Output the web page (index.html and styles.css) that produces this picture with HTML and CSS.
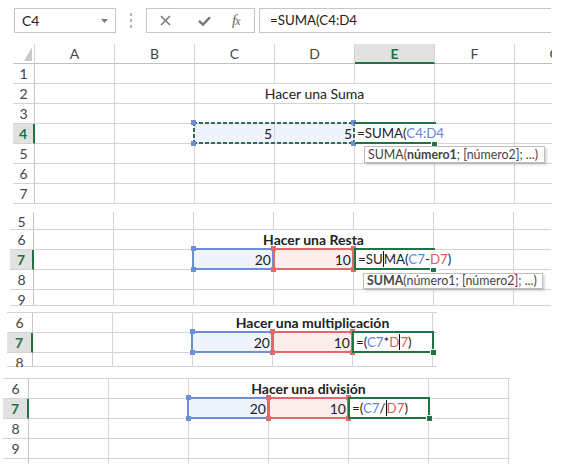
FILE: index.html
```html
<!DOCTYPE html>
<html lang="es">
<head>
<meta charset="utf-8">
<title>Excel SUMA</title>
<link rel="stylesheet" href="styles.css">
</head>
<body>
<div class="page">
  <div class="toolbar">
    <div class="namebox"><span>C4</span><svg class="dd" width="7" height="4" viewBox="0 0 7 4"><path d="M0 0H7L3.5 4Z" fill="#7a7a7a"/></svg></div>
    <div class="grip"><i></i><i></i><i></i></div>
    <div class="btns">
      <svg class="ico" width="11" height="11" viewBox="0 0 11 11"><path d="M1 1L10 10M10 1L1 10" stroke="#777" stroke-width="1.5" fill="none"/></svg>
      <svg class="ico" width="13" height="10" viewBox="0 0 13 10"><path d="M1 5L5 8.6L12 1.2" stroke="#777" stroke-width="2.4" fill="none"/></svg>
      <span class="fx">f<span>x</span></span>
    </div>
    <div class="fbar">=SUMA(C4:D4</div>
  </div>

  <div class="sheet s1">
    <div class="c corner"><svg width="22" height="19" viewBox="0 0 22 19"><path d="M19 3V17H11Z" fill="#c9c9c9"/></svg></div>
    <div class="c ch">A</div><div class="c ch">B</div><div class="c ch">C</div><div class="c ch">D</div><div class="c ch csel">E</div><div class="c ch">F</div><div class="c ch">G</div>

    <div class="c rn">1</div><div class="c"></div><div class="c"></div><div class="c"></div><div class="c"></div><div class="c"></div><div class="c"></div><div class="c"></div>
    <div class="c rn">2</div><div class="c"></div><div class="c"></div><div class="c title">Hacer una Suma</div><div class="c"></div><div class="c"></div>
    <div class="c rn">3</div><div class="c"></div><div class="c"></div><div class="c"></div><div class="c"></div><div class="c"></div><div class="c"></div><div class="c"></div>
    <div class="c rn rsel">4</div><div class="c"></div><div class="c"></div><div class="c num fb">5</div><div class="c num fb">5</div><div class="c"></div><div class="c"></div><div class="c"></div>
    <div class="c rn">5</div><div class="c"></div><div class="c"></div><div class="c"></div><div class="c"></div><div class="c"></div><div class="c"></div><div class="c"></div>
    <div class="c rn">6</div><div class="c"></div><div class="c"></div><div class="c"></div><div class="c"></div><div class="c"></div><div class="c"></div><div class="c"></div>
    <div class="c rn">7</div><div class="c"></div><div class="c"></div><div class="c"></div><div class="c"></div><div class="c"></div><div class="c"></div><div class="c"></div>

    <div class="ants"></div>
    <div class="h hb" style="left:178px;top:76px"></div>
    <div class="h hb" style="left:338px;top:76px"></div>
    <div class="h hb" style="left:178px;top:97px"></div>
    <div class="h hb" style="left:338px;top:97px"></div>
    <div class="gl" style="left:341px;top:78px;width:82px"></div>
    <div class="gl" style="left:342px;top:98px;width:77px"></div>
    <div class="h hg" style="left:419px;top:97px"></div>
    <div class="editor e1">=SUMA(<span class="rb">C4:D4</span></div>
    <div class="tip t1">SUMA(<b>número1</b>; [número2]; ...)</div>
  </div>

  <div class="sheet s2">
    <div class="c rn">5</div><div class="c"></div><div class="c"></div><div class="c"></div><div class="c"></div><div class="c"></div><div class="c"></div><div class="c"></div>
    <div class="c rn">6</div><div class="c"></div><div class="c"></div><div class="c title bold">Hacer una Resta</div><div class="c"></div><div class="c"></div>
    <div class="c rn rsel">7</div><div class="c"></div><div class="c"></div><div class="c num fb">20</div><div class="c num fr">10</div><div class="c"></div><div class="c"></div><div class="c"></div>
    <div class="c rn">8</div><div class="c"></div><div class="c"></div><div class="c"></div><div class="c"></div><div class="c"></div><div class="c"></div><div class="c"></div>
    <div class="c rn">9</div><div class="c"></div><div class="c"></div><div class="c"></div><div class="c"></div><div class="c"></div><div class="c"></div><div class="c"></div>

    <div class="rbox blue" style="left:182px;top:36px"></div>
    <div class="rbox red" style="left:263px;top:36px"></div>
    <div class="h hb" style="left:181px;top:34px"></div>
    <div class="h hb" style="left:181px;top:55px"></div>
    <div class="h hr" style="left:261px;top:34px"></div>
    <div class="h hr" style="left:341px;top:34px"></div>
    <div class="h hr" style="left:261px;top:55px"></div>
    <div class="h hr" style="left:341px;top:55px"></div>
    <div class="gl" style="left:344px;top:36px;width:2px;height:22px"></div>
    <div class="gl" style="left:345px;top:36px;width:80px"></div>
    <div class="gl" style="left:345px;top:56px;width:76px"></div>
    <div class="h hg" style="left:421px;top:55px"></div>
    <div class="editor e2">=SU<i class="caret"></i>MA(<span class="rb">C7</span>-<span class="rr">D7</span>)</div>
    <div class="tip t2"><b>SUMA</b>(número1; [número2]; ...)</div>
  </div>

  <div class="sheet s3">
    <div class="c rn">6</div><div class="c"></div><div class="c"></div><div class="c title bold">Hacer una multiplicación</div><div class="c"></div>
    <div class="c rn rsel">7</div><div class="c"></div><div class="c"></div><div class="c num fb">20</div><div class="c num fr">10</div><div class="c"></div><div class="c"></div>
    <div class="c rn">8</div><div class="c"></div><div class="c"></div><div class="c"></div><div class="c"></div><div class="c"></div><div class="c"></div>

    <div class="rbox blue" style="left:184px;top:18px"></div>
    <div class="rbox red" style="left:265px;top:18px"></div>
    <div class="h hb" style="left:183px;top:16px"></div>
    <div class="h hb" style="left:183px;top:37px"></div>
    <div class="h hr" style="left:263px;top:16px"></div>
    <div class="h hr" style="left:343px;top:16px"></div>
    <div class="h hr" style="left:263px;top:37px"></div>
    <div class="h hr" style="left:343px;top:37px"></div>
    <div class="gbox" style="left:345px;top:18px">=(<span class="rb">C7</span>*<span class="rr">D<i class="caret"></i>7</span>)</div>
    <div class="h hg" style="left:424px;top:37px"></div>
  </div>

  <div class="sheet s4">
    <div class="c rn">6</div><div class="c"></div><div class="c"></div><div class="c title bold">Hacer una división</div><div class="c"></div><div class="c"></div>
    <div class="c rn rsel">7</div><div class="c"></div><div class="c"></div><div class="c num fb">20</div><div class="c num fr">10</div><div class="c"></div><div class="c"></div><div class="c"></div>
    <div class="c rn">8</div><div class="c"></div><div class="c"></div><div class="c"></div><div class="c"></div><div class="c"></div><div class="c"></div><div class="c"></div>
    <div class="c rn">9</div><div class="c"></div><div class="c"></div><div class="c"></div><div class="c"></div><div class="c"></div><div class="c"></div><div class="c"></div>
    <div class="c rn nb"></div><div class="c nb"></div><div class="c nb"></div><div class="c nb"></div><div class="c nb"></div><div class="c nb"></div><div class="c nb"></div><div class="c nb"></div>

    <div class="rbox blue" style="left:184px;top:18px"></div>
    <div class="rbox red" style="left:265px;top:18px"></div>
    <div class="h hb" style="left:183px;top:16px"></div>
    <div class="h hb" style="left:183px;top:37px"></div>
    <div class="h hr" style="left:263px;top:16px"></div>
    <div class="h hr" style="left:343px;top:16px"></div>
    <div class="h hr" style="left:263px;top:37px"></div>
    <div class="h hr" style="left:343px;top:37px"></div>
    <div class="gbox" style="left:345px;top:18px">=(<span class="rb">C7</span>/<i class="caret"></i><span class="rr">D7</span>)</div>
    <div class="h hg" style="left:424px;top:37px"></div>
  </div>
</div>
</body>
</html>
```

FILE: styles.css
```css
html, body {
  margin: 0;
  padding: 0;
  background: #fff;
}
body {
  width: 566px;
  height: 464px;
  overflow: hidden;
  font-family: "Lato", "Liberation Sans", sans-serif;
  font-size: 14px;
  color: #222;
}
.page {
  display: flex;
  flex-direction: column;
  width: 566px;
}

/* ---------- formula toolbar ---------- */
.toolbar {
  height: 44px;
  box-sizing: border-box;
  padding-top: 8px;
  display: flex;
  align-items: flex-start;
}
.namebox {
  margin-left: 14px;
  width: 102px;
  height: 25px;
  box-sizing: border-box;
  border: 1px solid #c6c6c6;
  display: flex;
  align-items: center;
  justify-content: space-between;
  padding: 0 7px 0 7px;
  font-size: 14px;
}
.namebox .dd { margin-top: 1px; }
.grip {
  width: 30px;
  height: 25px;
  display: flex;
  flex-direction: column;
  align-items: center;
  justify-content: center;
  gap: 3px;
}
.grip i {
  display: block;
  width: 2px;
  height: 3px;
  background: #b4b4b4;
}
.btns {
  width: 109px;
  height: 25px;
  box-sizing: border-box;
  border: 1px solid #c6c6c6;
  display: flex;
  align-items: center;
  padding-left: 13px;
}
.btns .ico:nth-child(1) { margin-right: 27px; }
.btns .ico:nth-child(2) { margin-right: 21px; }
.fx {
  font-family: "Liberation Serif", serif;
  font-style: italic;
  font-size: 15px;
  color: #666;
  letter-spacing: -1px;
}
.fx span { font-size: 12px; }
.fbar {
  margin-left: 4px;
  width: 292px;
  height: 25px;
  box-sizing: border-box;
  border: 1px solid #c6c6c6;
  border-right: none;
  padding-left: 10px;
  line-height: 23px;
  font-size: 13.3px;
}

/* ---------- sheets ---------- */
.sheet {
  position: relative;
  display: grid;
  overflow: hidden;
}
.s1 {
  margin-left: 13px;
  width: 539px;
  grid-template-columns: 22px repeat(7, 80px);
  grid-template-rows: repeat(8, 20px);
}
.s2 {
  margin-top: 8px;
  margin-left: 10px;
  width: 541px;
  grid-template-columns: 24px repeat(7, 80px);
  grid-template-rows: 18px 20px 20px 20px 16px;
}
.s3 {
  margin-top: 6px;
  margin-left: 7px;
  width: 430px;
  border-top: 1px solid #d4d4d4;
  grid-template-columns: 26px repeat(6, 80px);
  grid-template-rows: 20px 20px 14px;
}
.s4 {
  margin-top: 11px;
  margin-left: 3px;
  width: 507px;
  border-top: 1px solid #d4d4d4;
  grid-template-columns: 26px repeat(7, 80px);
  grid-template-rows: 20px 20px 20px 20px 6px;
}

.c {
  box-sizing: border-box;
  border-right: 1px solid #d4d4d4;
  border-bottom: 1px solid #d4d4d4;
  line-height: 19px;
  padding: 0 2px;
  white-space: nowrap;
  overflow: visible;
}
.c.nb { border-bottom: none; }
.corner { padding: 0; border-bottom-color: #c0c0c0; }
.corner svg { display: block; }
.ch {
  text-align: center;
  color: #444;
  border-bottom-color: #c0c0c0;
}
.csel {
  background: #e1e1e1;
  color: #217346;
  font-weight: bold;
  border-bottom: 2px solid #217346;
}
.rn {
  text-align: center;
  color: #444;
  border-right-color: #c6c6c6;
  padding: 0;
}
.rsel {
  background: #e1e1e1;
  color: #217346;
  font-weight: bold;
  border-right: 2px solid #217346;
}
.num { text-align: right; }
.title {
  grid-column: span 3;
  text-align: center;
}
.bold { font-weight: bold; }
.fb { background: #eef3fc; }
.fr { background: #fdeeee; }

/* ---------- overlays ---------- */
.ants {
  position: absolute;
  left: 180px;
  top: 78px;
  width: 162px;
  height: 22px;
  box-sizing: border-box;
  background:
    repeating-linear-gradient(90deg, #2f6c5c 0 4px, transparent 4px 6px) top left / 100% 2px no-repeat,
    repeating-linear-gradient(90deg, #2f6c5c 0 4px, transparent 4px 6px) bottom left / 100% 2px no-repeat,
    repeating-linear-gradient(180deg, #2f6c5c 0 4px, transparent 4px 6px) top left / 2px 100% no-repeat,
    repeating-linear-gradient(180deg, #2f6c5c 0 4px, transparent 4px 6px) top right / 2px 100% no-repeat;
}
.h {
  position: absolute;
  width: 5px;
  height: 5px;
}
.hb { background: #6d8fd7; }
.hr { background: #e06a6a; }
.hg { background: #217346; box-shadow: 0 0 0 1px #fff; }
.gl {
  position: absolute;
  height: 2px;
  background: #217346;
}
.rbox {
  position: absolute;
  width: 82px;
  height: 22px;
  box-sizing: border-box;
  border: 2px solid;
}
.rbox.blue { border-color: #6d8fd7; }
.rbox.red { width: 81px; border-color: #e06a6a; }
.editor {
  position: absolute;
  height: 18px;
  background: #fff;
  line-height: 18px;
  padding-left: 2px;
  white-space: nowrap;
  box-sizing: border-box;
  font-size: 13.3px;
}
.e1 { left: 342px; top: 80px; width: 88px; }
.e2 { left: 346px; top: 38px; width: 92px; }
.gbox {
  position: absolute;
  width: 82px;
  height: 22px;
  box-sizing: border-box;
  border: 2px solid #217346;
  background: #fff;
  line-height: 18px;
  padding-left: 2px;
  white-space: nowrap;
  font-size: 13.3px;
}
.rb { color: #5f86d6; }
.rr { color: #e05a5a; }
.caret {
  display: inline-block;
  width: 1px;
  height: 16px;
  background: #111;
  vertical-align: -3px;
}
.tip {
  position: absolute;
  height: 17px;
  box-sizing: border-box;
  border: 1px solid #bdbdbd;
  background: #fff;
  box-shadow: 2px 2px 2px rgba(0,0,0,0.15);
  color: #444;
  font-size: 12.4px;
  line-height: 15px;
  padding: 0 3px;
  white-space: nowrap;
}
.tip b { color: #444; }
.t1 { left: 351px; top: 102px; width: 181px; }
.t2 { left: 353px; top: 61px; width: 180px; height: 16px; line-height: 14px; }
```
